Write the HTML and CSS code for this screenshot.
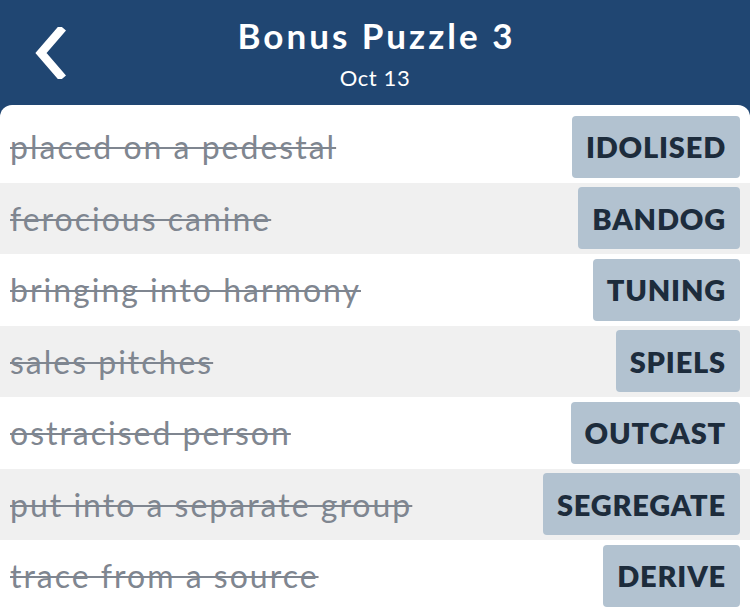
FILE: index.html
```html
<!DOCTYPE html>
<html>
<head>
<meta charset="utf-8">
<link rel="stylesheet" href="styles.css">
</head>
<body>
<div class="app">
  <header class="topbar">
    <button class="back" aria-label="Back">
      <svg width="34" height="52" viewBox="0 0 34 52"><path d="M28 4 L9 26 L28 48" fill="none" stroke="#fff" stroke-width="8.5" stroke-linecap="square" stroke-linejoin="miter"/></svg>
    </button>
    <div class="titles">
      <h1 class="title">Bonus Puzzle 3</h1>
      <div class="date">Oct 13</div>
    </div>
  </header>
  <main class="card">
    <div class="row"><span class="clue">placed on a pedestal</span><span class="answer">IDOLISED</span></div>
    <div class="row alt"><span class="clue">ferocious canine</span><span class="answer">BANDOG</span></div>
    <div class="row"><span class="clue">bringing into harmony</span><span class="answer">TUNING</span></div>
    <div class="row alt"><span class="clue">sales pitches</span><span class="answer">SPIELS</span></div>
    <div class="row"><span class="clue">ostracised person</span><span class="answer">OUTCAST</span></div>
    <div class="row alt"><span class="clue">put into a separate group</span><span class="answer">SEGREGATE</span></div>
    <div class="row"><span class="clue">trace from a source</span><span class="answer">DERIVE</span></div>
  </main>
</div>
</body>
</html>
```
FILE: styles.css
```css
* { box-sizing: border-box; }
html, body { margin: 0; padding: 0; }
body {
  width: 750px;
  height: 611px;
  overflow: hidden;
  font-family: "Lato", "Open Sans", sans-serif;
  background: #204672;
}
.app { display: flex; flex-direction: column; height: 611px; }
.topbar {
  height: 105px;
  flex: none;
  position: relative;
  display: flex;
  justify-content: center;
  align-items: flex-start;
  color: #fff;
}
.back {
  position: absolute;
  left: 32px;
  top: 27px;
  padding: 0;
  border: 0;
  background: none;
  display: flex;
}
.titles { display: flex; flex-direction: column; align-items: center; padding-top: 13px; }
.title {
  margin: 0 -3px 0 0;
  font-size: 35px;
  font-weight: 700;
  line-height: 44px;
  letter-spacing: 3px;
}
.date {
  font-size: 22px;
  line-height: 26px;
  margin-top: 8px;
  letter-spacing: 0.6px;
}
.card {
  flex: 1;
  background: #fff;
  border-radius: 12px 12px 0 0;
  padding-top: 6px;
  display: flex;
  flex-direction: column;
}
.row {
  height: 71.5px;
  flex: none;
  display: flex;
  align-items: center;
  justify-content: space-between;
  padding: 0 10px;
}
.row.alt { background: #f0f0f0; }
.clue {
  font-size: 32px;
  letter-spacing: 2px;
  color: #7f8690;
  text-decoration: line-through;
  text-decoration-thickness: 2px;
}
.answer {
  height: 62px;
  display: flex;
  align-items: center;
  padding: 0 14px;
  background: #b2c2d0;
  border-radius: 4px;
  color: #1d2c3c;
  font-size: 29px;
  font-weight: 800;
  letter-spacing: 0.8px;
}
```
